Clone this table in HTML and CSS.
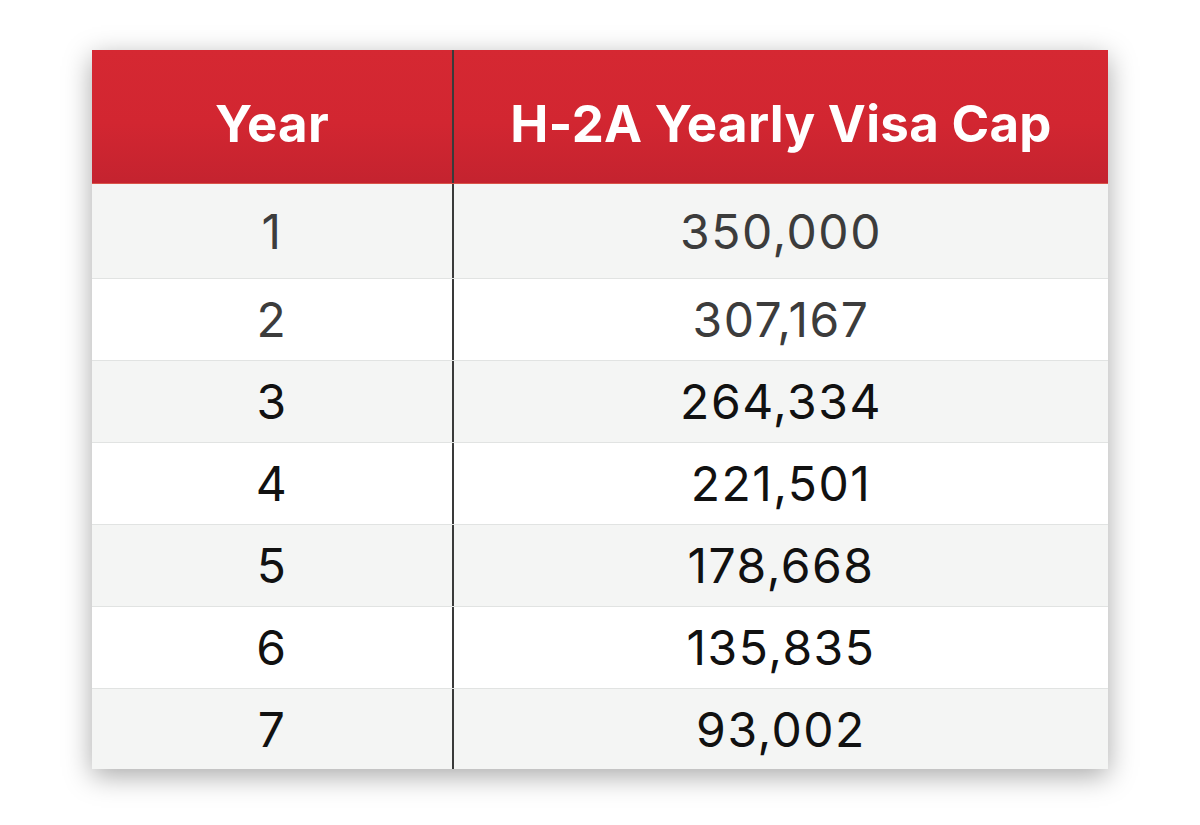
FILE: index.html
```html
<!DOCTYPE html>
<html lang="en">
<head>
<meta charset="utf-8">
<title>H-2A Yearly Visa Cap</title>
<link rel="stylesheet" href="styles.css">
</head>
<body>
<div class="page">
  <div class="table">
    <div class="row head">
      <div class="cell left">Year</div>
      <div class="cell right">H-2A Yearly Visa Cap</div>
    </div>
    <div class="row first alt gray-text">
      <div class="cell left">1</div>
      <div class="cell right">350,000</div>
    </div>
    <div class="row gray-text">
      <div class="cell left">2</div>
      <div class="cell right">307,167</div>
    </div>
    <div class="row alt">
      <div class="cell left">3</div>
      <div class="cell right">264,334</div>
    </div>
    <div class="row">
      <div class="cell left">4</div>
      <div class="cell right">221,501</div>
    </div>
    <div class="row alt">
      <div class="cell left">5</div>
      <div class="cell right">178,668</div>
    </div>
    <div class="row">
      <div class="cell left">6</div>
      <div class="cell right">135,835</div>
    </div>
    <div class="row alt last">
      <div class="cell left">7</div>
      <div class="cell right">93,002</div>
    </div>
  </div>
</div>
</body>
</html>
```

FILE: styles.css
```css
html, body {
  margin: 0;
  padding: 0;
  background: #ffffff;
}

.page {
  padding: 50px 0 56px 92px;
  min-height: 825px;
  box-sizing: border-box;
}

.table {
  width: 1016px;
  display: flex;
  flex-direction: column;
  box-shadow: 0 7px 26px rgba(0, 0, 0, 0.34);
  font-family: "Inter", "DejaVu Sans", sans-serif;
}

.row {
  display: grid;
  grid-template-columns: 362px 1fr;
  height: 82px;
  background: #ffffff;
  color: #111111;
  font-size: 48px;
  letter-spacing: 1.5px;
  font-weight: 400;
  border-top: 1px solid #e1e3e2;
  box-sizing: border-box;
}

.row.alt {
  background: #f4f5f4;
}

.row.gray-text {
  color: #3c3c3c;
}

.row.head {
  height: 134px;
  border-top: none;
  background: linear-gradient(to bottom, #d52832 0%, #d22631 55%, #c4232f 100%);
  color: #ffffff;
  font-weight: 700;
  font-size: 51px;
  letter-spacing: 0.3px;
  border-bottom: 1px solid #d9544a;
}

.row.head .cell {
  padding-top: 14px;
}

.row.first {
  height: 94px;
  border-top: none;
}

.row.last {
  height: 81px;
}

.cell {
  display: flex;
  align-items: center;
  justify-content: center;
  box-sizing: border-box;
}

.cell.left {
  border-right: 2px solid #3a3a3a;
}
```
